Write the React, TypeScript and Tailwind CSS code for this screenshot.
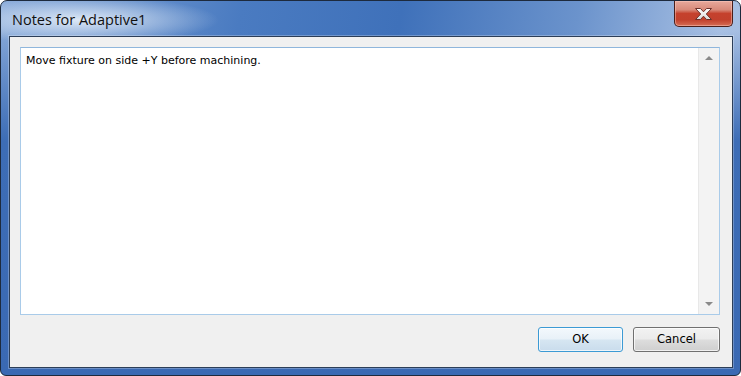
import React from "react";

function CloseX() {
  return (
    <svg width="19" height="14" viewBox="0 0 19 14">
      <defs>
        <linearGradient id="xg" x1="0" y1="0" x2="0" y2="1">
          <stop offset="0" stopColor="#ffffff" />
          <stop offset="1" stopColor="#d9d9d9" />
        </linearGradient>
      </defs>
      <path
        d="M1.5 1.5 H6.5 L9.5 4.8 L12.5 1.5 H17.5 L12.3 7 L17.5 12.5 H12.5 L9.5 9.2 L6.5 12.5 H1.5 L6.7 7 Z"
        fill="url(#xg)"
        stroke="#6b302a"
        strokeWidth="1"
        strokeLinejoin="round"
      />
    </svg>
  );
}

export default function App() {
  return (
    <div className="w-[741px] h-[376px] bg-white">
      <div
        className="relative flex flex-col w-[741px] h-[376px] rounded-t-[7px] rounded-b-[6px] border border-[#1d2a3d] pl-[8px] pr-[7px] pb-[7px] bg-[radial-gradient(ellipse_140px_24px_at_78px_19px,rgba(226,236,248,0.95),rgba(226,236,248,0)),linear-gradient(180deg,rgba(59,107,181,0)_0px,rgba(59,107,181,0)_30px,#3d6db6_140px,#3a69b3_100%),linear-gradient(100deg,#86a8d8_0%,#4a7bc1_30%,#3f71ba_50%,#6b93cc_72%,#a8c0e3_90%,#9eb8df_100%)]"
      >
        {/* title bar */}
        <div className="h-[35px] flex items-start shrink-0">
          <div className="pt-[9px] pl-[3px] text-[14.5px] leading-[20px] text-[#101010] [font-family:'Open_Sans',sans-serif]">
            Notes for Adaptive1
          </div>
        </div>
        {/* close button */}
        <div className="absolute right-[7px] top-0 w-[59px] h-[26px] rounded-b-[5px] border border-t-0 border-[#4a1e1a] bg-[linear-gradient(180deg,#e7a99c_0%,#d88a7a_35%,#c5412d_50%,#c2402c_75%,#d56d55_100%)] flex items-center justify-center shadow-[inset_0_0_0_1px_rgba(255,210,200,0.45)]">
          <CloseX />
        </div>
        {/* client */}
        <div className="flex-1 flex flex-col border border-[#2c3e58] bg-[#f0f0f0] pl-[10px] pr-[12px] pt-[10px] shadow-[0_0_0_1px_rgba(255,255,255,0.25)]">
          <div className="h-[268px] flex border border-[#a9cbe9] border-t-[#8fb6dc] bg-white">
            <div className="flex-1 pl-[5px] pt-[6px] text-[11px] leading-[13px] text-black [font-family:'DejaVu_Sans',sans-serif]">
              Move fixture on side +Y before machining.
            </div>
            <div className="w-[21px] flex flex-col justify-between items-center bg-[#f3f3f3] border-l border-[#e8e8e8] py-[8px]">
              <div className="w-0 h-0 border-l-[4px] border-r-[4px] border-b-[4px] border-l-transparent border-r-transparent border-b-[#8a8a8a]" />
              <div className="w-0 h-0 border-l-[4px] border-r-[4px] border-t-[4px] border-l-transparent border-r-transparent border-t-[#8a8a8a]" />
            </div>
          </div>
          <div className="flex justify-end gap-[10px] mt-[12px]">
            <button className="w-[85px] h-[25px] rounded-[3px] border border-[#3c9ad4] bg-[linear-gradient(180deg,#f3f8fc_0%,#e8f1f8_48%,#d6e6f2_52%,#c9dcec_100%)] shadow-[inset_0_0_0_1px_rgba(255,255,255,0.7)] text-[11.5px] text-black [font-family:'DejaVu_Sans',sans-serif]">
              OK
            </button>
            <button className="w-[87px] h-[25px] rounded-[3px] border border-[#707070] bg-[linear-gradient(180deg,#f2f2f2_0%,#ebebeb_48%,#dddddd_52%,#cfcfcf_100%)] shadow-[inset_0_0_0_1px_rgba(255,255,255,0.7)] text-[11.5px] text-black [font-family:'DejaVu_Sans',sans-serif]">
              Cancel
            </button>
          </div>
        </div>
      </div>
    </div>
  );
}
